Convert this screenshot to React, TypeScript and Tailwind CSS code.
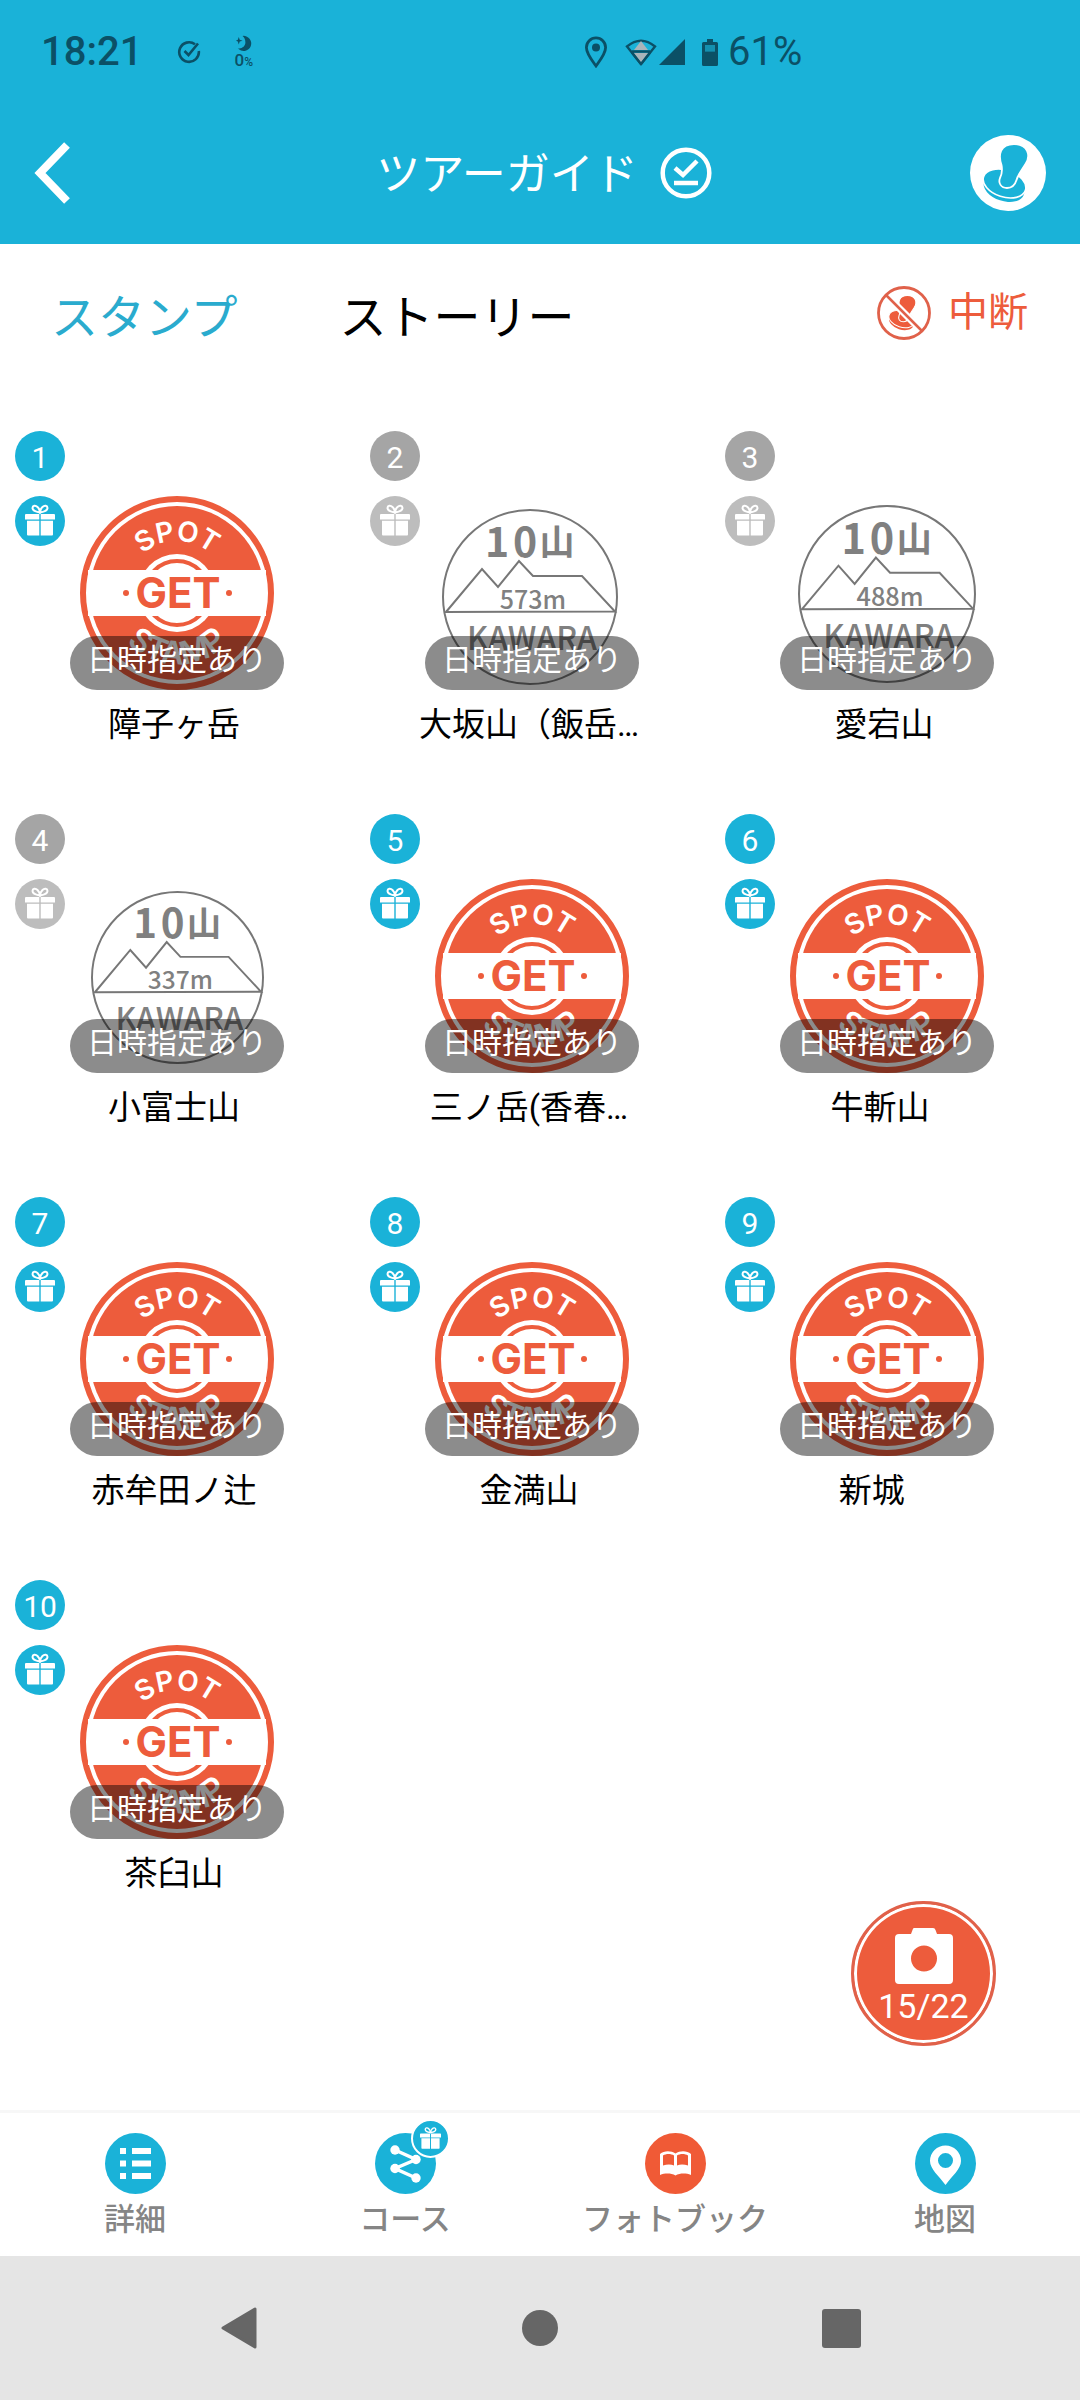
import React, { useId } from "react";

type Spot = { no: number; name: string; collected: boolean; mark?: { height: string; x: number; y: number; size: number } };

const SPOTS: Spot[] = [
  { no: 1, name: "障子ヶ岳", collected: true },
  { no: 2, name: "大坂山（飯岳…", collected: false, mark: { height: "573m", x: 7, y: 13, size: 176 } },
  { no: 3, name: "愛宕山", collected: false, mark: { height: "488m", x: 8, y: 9, size: 178 } },
  { no: 4, name: "小富士山", collected: false, mark: { height: "337m", x: 11, y: 12, size: 173 } },
  { no: 5, name: "三ノ岳(香春…", collected: true },
  { no: 6, name: "牛斬山 ", collected: true },
  { no: 7, name: "赤牟田ノ辻", collected: true },
  { no: 8, name: "金満山", collected: true },
  { no: 9, name: "新城   ", collected: true },
  { no: 10, name: "茶臼山", collected: true },
];

function GiftGlyph({ className }: { className: string }) {
  return (
    <svg viewBox="0 0 50 50" className={className} aria-hidden="true">
      <g fill="none" stroke="#fff" strokeWidth="2">
        <path d="M25 16.5C22 16 17.5 14.5 17.5 12C17.5 9.500 20.500 9 22.500 11C24 12.500 25 14.500 25 16.500Z" />
        <path d="M25 16.5C28 16 32.500 14.500 32.500 12C32.500 9.500 29.500 9 27.500 11C26 12.500 25 14.500 25 16.500Z" />
      </g>
      <g fill="#fff">
        <path d="M11 18H24.300V23.500H10V19Q10 18 11 18Z" />
        <path d="M25.700 18H39Q40 18 40 19V23.500H25.700Z" />
        <path d="M12 24.700H24.300V39.500H13Q12 39.500 12 38.500Z" />
        <path d="M25.700 24.700H38V38.500Q38 39.500 37 39.500H25.700Z" />
      </g>
    </svg>
  );
}

function RubberStamp({ ink, paper }: { ink: string; paper: string }) {
  return (
    <g>
      <ellipse cx="34" cy="53" rx="21" ry="13" transform="rotate(18 34 53)" fill={ink} />
      <ellipse cx="34.500" cy="48.500" rx="22" ry="13.500" transform="rotate(18 34.500 48.500)" fill={ink} stroke={paper} strokeWidth="1.600" />
      <path
        d="M30 43C32 39 32.500 35 31.500 30C28 20 30 9 44 9C58 9 61 21 55.500 29C52 35 48.500 38 46.500 45C45 50 42 53 37 53C31 53 28 48 30 43Z"
        fill={ink}
        stroke={paper}
        strokeWidth="1.800"
      />
    </g>
  );
}

function SpotStamp() {
  const id = useId();
  return (
    <svg viewBox="0 0 194 194" className="size-[194px]" aria-hidden="true">
      <circle cx="97" cy="97" r="94" fill="#fff" stroke="#ed5c3c" strokeWidth="6" />
      <circle cx="97" cy="97" r="87" fill="#ed5c3c" />
      <circle cx="97" cy="97" r="39" fill="#fff" />
      <circle cx="97" cy="97" r="32" fill="#fff" stroke="#ed5c3c" strokeWidth="4" />
      <rect x="8" y="74" width="178" height="46" fill="#fff" />
      <path id={id + "top"} d="M45 97A52 52 0 0 1 149 97" fill="none" />
      <path id={id + "low"} d="M26 97A71 71 0 0 0 168 97" fill="none" />
      <g className="font-['Inter'] font-semibold" fill="#fff" textAnchor="middle">
        <text fontSize="28">
          <textPath href={"#" + id + "top"} startOffset="50%">SPOT</textPath>
        </text>
        <text fontSize="32">
          <textPath href={"#" + id + "low"} startOffset="50%">STAMP</textPath>
        </text>
      </g>
      <text x="98" y="112" textAnchor="middle" fontSize="42" fill="#ed5c3c" className="font-['Inter'] font-bold">GET</text>
      <circle cx="46" cy="97" r="3" fill="#ed5c3c" />
      <circle cx="149" cy="97" r="3" fill="#ed5c3c" />
    </svg>
  );
}

function MountainMark({ height, x, y, size }: { height: string; x: number; y: number; size: number }) {
  return (
    <svg viewBox="0 0 194 194" className="size-[194px]" aria-hidden="true">
      <svg x={x} y={y} width={size} height={size} viewBox="0 0 176 176">
        <g fill="none" stroke="#777" strokeWidth="2">
          <circle cx="88" cy="88" r="87" />
          <path d="M4 103L40 60L56 78L77 52L91 67H140L173 102.500Z" />
        </g>
        <g fill="#808080" textAnchor="middle">
          <text x="55" y="48" fontSize="41" className="font-['Noto_Sans_CJK_JP'] font-bold">1</text>
          <text x="83" y="48" fontSize="41" className="font-['Noto_Sans_CJK_JP'] font-bold">0</text>
          <text x="115" y="46" fontSize="35" className="font-['Noto_Sans_CJK_JP'] font-bold">山</text>
          <text x="91" y="100" fontSize="25" className="font-['Noto_Sans_CJK_JP'] font-medium">{height}</text>
          <text x="90" y="141" fontSize="32" className="font-['Noto_Sans_CJK_JP'] font-medium">KAWARA</text>
        </g>
      </svg>
    </svg>
  );
}

function SpotCell({ spot }: { spot: Spot }) {
  return (
    <button type="button" className="flex w-full items-start gap-[5px] text-left">
      <span className="flex flex-col gap-[15px]">
        <span
          className={
            "flex size-[50px] items-center justify-center rounded-full pt-1 text-[30px] leading-none text-white " +
            (spot.collected ? "bg-[#1ab2d8]" : "bg-[#a5a5a5]")
          }
        >
          {spot.no}
        </span>
        <span className={"size-[50px] rounded-full " + (spot.collected ? "bg-[#1ab2d8]" : "bg-[#bdbdbd]")}>
          <GiftGlyph className="size-[50px]" />
        </span>
      </span>
      <span className="flex w-[214px] flex-col pt-[65px]">
        <span className="relative flex justify-center">
          {spot.mark ? <MountainMark {...spot.mark} /> : <SpotStamp />}
          <span className="absolute inset-x-0 bottom-0 flex h-[54px] justify-center rounded-full bg-black/45 pt-1 text-[30px] leading-[40px] text-white">
            日時指定あり
          </span>
        </span>
        <span className="mt-[15px] flex w-[208px] justify-center text-[33px] leading-[40px] whitespace-pre text-black">{spot.name}</span>
      </span>
    </button>
  );
}

function StatusBar() {
  return (
    <div className="flex h-[102px] items-center pt-[2px] pl-[41px] text-[40px] leading-none text-[#0b5066]">
      <span className="font-medium">18:21</span>
      <svg viewBox="0 0 24 24" className="ml-[35px] size-[24px]" fill="none" stroke="currentColor" strokeWidth="2.600" aria-hidden="true">
        <path d="M18 4.300A9.800 9.800 0 1 0 21.800 11" />
        <path d="M7.500 11L11.500 15L21 3.500" />
      </svg>
      <span className="ml-[33px] flex flex-col items-center">
        <svg viewBox="0 0 18 18" className="size-[17px]" fill="currentColor" aria-hidden="true">
          <path d="M8 1A8 8 0 1 1 3 14C7 15 11 12 11 8C11 5 10 2.500 8 1Z" />
          <path d="M4 2L5 5L8 6L5 7L4 10L3 7L1 6L3 5Z" />
        </svg>
        <span className="text-[17px] leading-[16px] font-medium">
          0<span className="text-[12px]">%</span>
        </span>
      </span>
      <svg viewBox="0 0 24 32" className="ml-[331px] h-[32px] w-[24px]" fill="none" stroke="currentColor" strokeWidth="2.800" aria-hidden="true">
        <path d="M12 30C7 23 2.400 17.500 2.400 11.500A9.600 9.600 0 0 1 21.600 11.500C21.600 17.500 17 23 12 30Z" />
        <circle cx="12" cy="11.500" r="4" fill="currentColor" stroke="none" />
      </svg>
      <svg viewBox="0 0 32 28" className="ml-[17px] h-[28px] w-[32px]" aria-hidden="true">
        <path d="M2 8.500Q16 -3 30 8.500L16 26Z" fill="none" stroke="currentColor" strokeWidth="2.400" />
        <path d="M16 3L23 12H9Z" fill="#a9b4ba" />
        <path d="M8.500 15H23.500L16 25Z" fill="#a9b4ba" />
        <path d="M7 13.500H25M16 26L7 14.500M16 26L25 14.500" fill="none" stroke="currentColor" strokeWidth="2.400" />
      </svg>
      <svg viewBox="0 0 26 26" className="ml-[2px] size-[26px]" fill="currentColor" aria-hidden="true">
        <path d="M26 0V26H0Z" />
      </svg>
      <svg viewBox="0 0 16 27" className="ml-[17px] h-[27px] w-[16px]" fill="currentColor" aria-hidden="true">
        <path fillRule="evenodd" d="M5 0H11V3H14.500Q16 3 16 4.500V25.500Q16 27 14.500 27H1.500Q0 27 0 25.500V4.500Q0 3 1.500 3H5ZM3 6V12.500H13V6Z" />
        <rect x="3" y="6" width="10" height="6.500" fillOpacity=".35" />
      </svg>
      <span className="ml-[10px]">61%</span>
    </div>
  );
}

function Header() {
  return (
    <header className="bg-[#1ab2d8] text-white">
      <StatusBar />
      <div className="grid h-[142px] grid-cols-[1fr_auto_1fr] items-center px-[34px]">
        <button type="button" aria-label="戻る" className="justify-self-start">
          <svg viewBox="0 0 36 62" className="h-[62px] w-[36px]" fill="none" stroke="currentColor" strokeWidth="8" aria-hidden="true">
            <path d="M33 3L6 31L33 59" />
          </svg>
        </button>
        <h1 className="flex items-center gap-[22px] pl-2 text-[44px] leading-[60px]">
          <span className="pt-1">ツアーガイド</span>
          <svg viewBox="0 0 52 52" className="size-[52px]" fill="none" stroke="currentColor" strokeWidth="4.500" aria-hidden="true">
            <circle cx="26" cy="26" r="23.300" />
            <path d="M15 21L23 28L37 14" />
            <path d="M14 36H38" />
          </svg>
        </h1>
        <button type="button" aria-label="スタンプを押す" className="justify-self-end">
          <svg viewBox="0 0 76 76" className="size-[76px]" aria-hidden="true">
            <circle cx="38" cy="38" r="38" fill="#fff" />
            <RubberStamp ink="#1ab2d8" paper="#fff" />
          </svg>
        </button>
      </div>
    </header>
  );
}

function TabRow() {
  return (
    <div className="flex h-[144px] items-center justify-between pr-[52px] pl-[51px]">
      <div role="tablist" className="flex gap-[102px] pt-1 text-[47px] leading-[60px]">
        <button type="button" role="tab" aria-selected="true" className="text-[#2aabce]">スタンプ</button>
        <button type="button" role="tab" aria-selected="false" className="text-black">ストーリー</button>
      </div>
      <button type="button" className="flex items-center gap-[17px] pb-1.5 text-[40px] leading-[54px] text-[#ed5c3c]">
        <svg viewBox="0 0 54 54" className="size-[54px]" aria-hidden="true">
          <g transform="translate(4 4) scale(.6)">
            <RubberStamp ink="#ed5c3c" paper="#fff" />
          </g>
          <path d="M9 9L45 45" stroke="#fff" strokeWidth="7" />
          <path d="M9 9L45 45" stroke="#e0614a" strokeWidth="2.500" />
          <circle cx="27" cy="27" r="25.500" fill="none" stroke="#e0614a" strokeWidth="2.800" />
        </svg>
        中断
      </button>
    </div>
  );
}

const NAV = [
  { label: "詳細", color: "#1ab2d8", icon: <path fill="#fff" d="M15 15H21V21H15ZM27 15H46V21H27ZM15 27.500H21V33.500H15ZM27 27.500H46V33.500H27ZM15 40H21V46H15ZM27 40H46V46H27Z" /> },
  {
    label: "コース",
    color: "#1ab2d8",
    gift: true,
    icon: (
      <g fill="#fff">
        <path d="M20 17L41 26.500L20 35.500L41 45" fill="none" stroke="#fff" strokeWidth="3.500" />
        <circle cx="20" cy="17" r="4.700" />
        <circle cx="41" cy="26.500" r="4.700" />
        <circle cx="20" cy="35.500" r="4.700" />
        <circle cx="41" cy="45" r="4.700" />
      </g>
    ),
  },
  {
    label: "フォトブック",
    color: "#f05a36",
    icon: (
      <path
        fill="#fff"
        fillRule="evenodd"
        d="M15 21C19 17.500 26 17.500 30.500 20.500C35 17.500 42 17.500 46 21V42C41 40 35 40 30.500 42.500C26 40 20 40 15 42ZM18 22.500V32.500C22 31 26 31 29 32.500V22.500C26 20.500 21 20.500 18 22.500ZM32 22.500V32.500C35 31 39 31 43 32.500V22.500C40 20.500 35 20.500 32 22.500Z"
      />
    ),
  },
  {
    label: "地図",
    color: "#1ab2d8",
    icon: <path fill="#fff" fillRule="evenodd" d="M30.500 52C24 43 15 36 15 28A15.500 15.500 0 0 1 46 28C46 36 37 43 30.500 52ZM30.500 20A7.500 7.500 0 1 0 30.500 35A7.500 7.500 0 0 0 30.500 20Z" />,
  },
];

function BottomNav() {
  return (
    <nav className="grid grid-cols-4 border-t-[3px] border-[#f7f7f7] bg-white pt-5 pb-3.5">
      {NAV.map((item) => (
        <a key={item.label} href="#" className="flex flex-col items-center gap-1 text-[31px] leading-[44px] font-medium text-[#858585]">
          <span className="relative">
            <svg viewBox="0 0 61 61" className="size-[61px]" aria-hidden="true">
              <circle cx="30.500" cy="30.500" r="30.500" fill={item.color} />
              {item.icon}
            </svg>
            {item.gift && (
              <span className="absolute -top-[14px] -right-[14px] rounded-full border-2 border-white bg-[#1ab2d8]">
                <GiftGlyph className="size-[35px]" />
              </span>
            )}
          </span>
          {item.label}
        </a>
      ))}
    </nav>
  );
}

function SystemNav() {
  return (
    <div className="grid h-[144px] grid-cols-3 place-items-center bg-[#e5e5e5] px-[88px] text-[#666]">
      <button type="button" aria-label="戻る">
        <svg viewBox="0 0 40 42" className="h-[42px] w-[40px]" fill="currentColor" stroke="currentColor" strokeWidth="3" strokeLinejoin="round" aria-hidden="true">
          <path d="M4 21L36 2V40Z" />
        </svg>
      </button>
      <button type="button" aria-label="ホーム" className="size-[36px] rounded-full bg-[#666]" />
      <button type="button" aria-label="履歴" className="size-[39px] rounded-[3px] bg-[#666]" />
    </div>
  );
}

export default function App() {
  return (
    <div lang="ja" className="flex min-h-screen flex-col bg-white font-['Roboto','Noto_Sans_CJK_JP',sans-serif]">
      <Header />
      <main className="relative flex-1">
        <TabRow />
        <ul className="grid grid-cols-3 gap-y-[69px] pt-[43px] pb-10 pl-[15px]">
          {SPOTS.map((spot) => (
            <li key={spot.no}>
              <SpotCell spot={spot} />
            </li>
          ))}
        </ul>
        <button
          type="button"
          className="absolute right-[84px] bottom-[64px] flex size-[145px] flex-col items-center rounded-full border-3 border-[#e0614a] bg-[#ed5c3c] pt-[24px] text-[34px] leading-[40px] text-white ring-3 ring-white ring-inset"
        >
          <svg viewBox="0 0 58 56" className="h-[56px] w-[58px]" aria-hidden="true">
            <path
              fill="#fff"
              fillRule="evenodd"
              d="M19 0H38Q40 0 40.500 2L42 6H54Q58 6 58 10V52Q58 56 54 56H4Q0 56 0 52V10Q0 6 4 6H16L17.500 2Q18 0 19 0ZM29 17.500A13 13 0 1 0 29 43.500A13 13 0 0 0 29 17.500Z"
            />
          </svg>
          <span className="mt-[2px]">15/22</span>
        </button>
      </main>
      <BottomNav />
      <SystemNav />
    </div>
  );
}
